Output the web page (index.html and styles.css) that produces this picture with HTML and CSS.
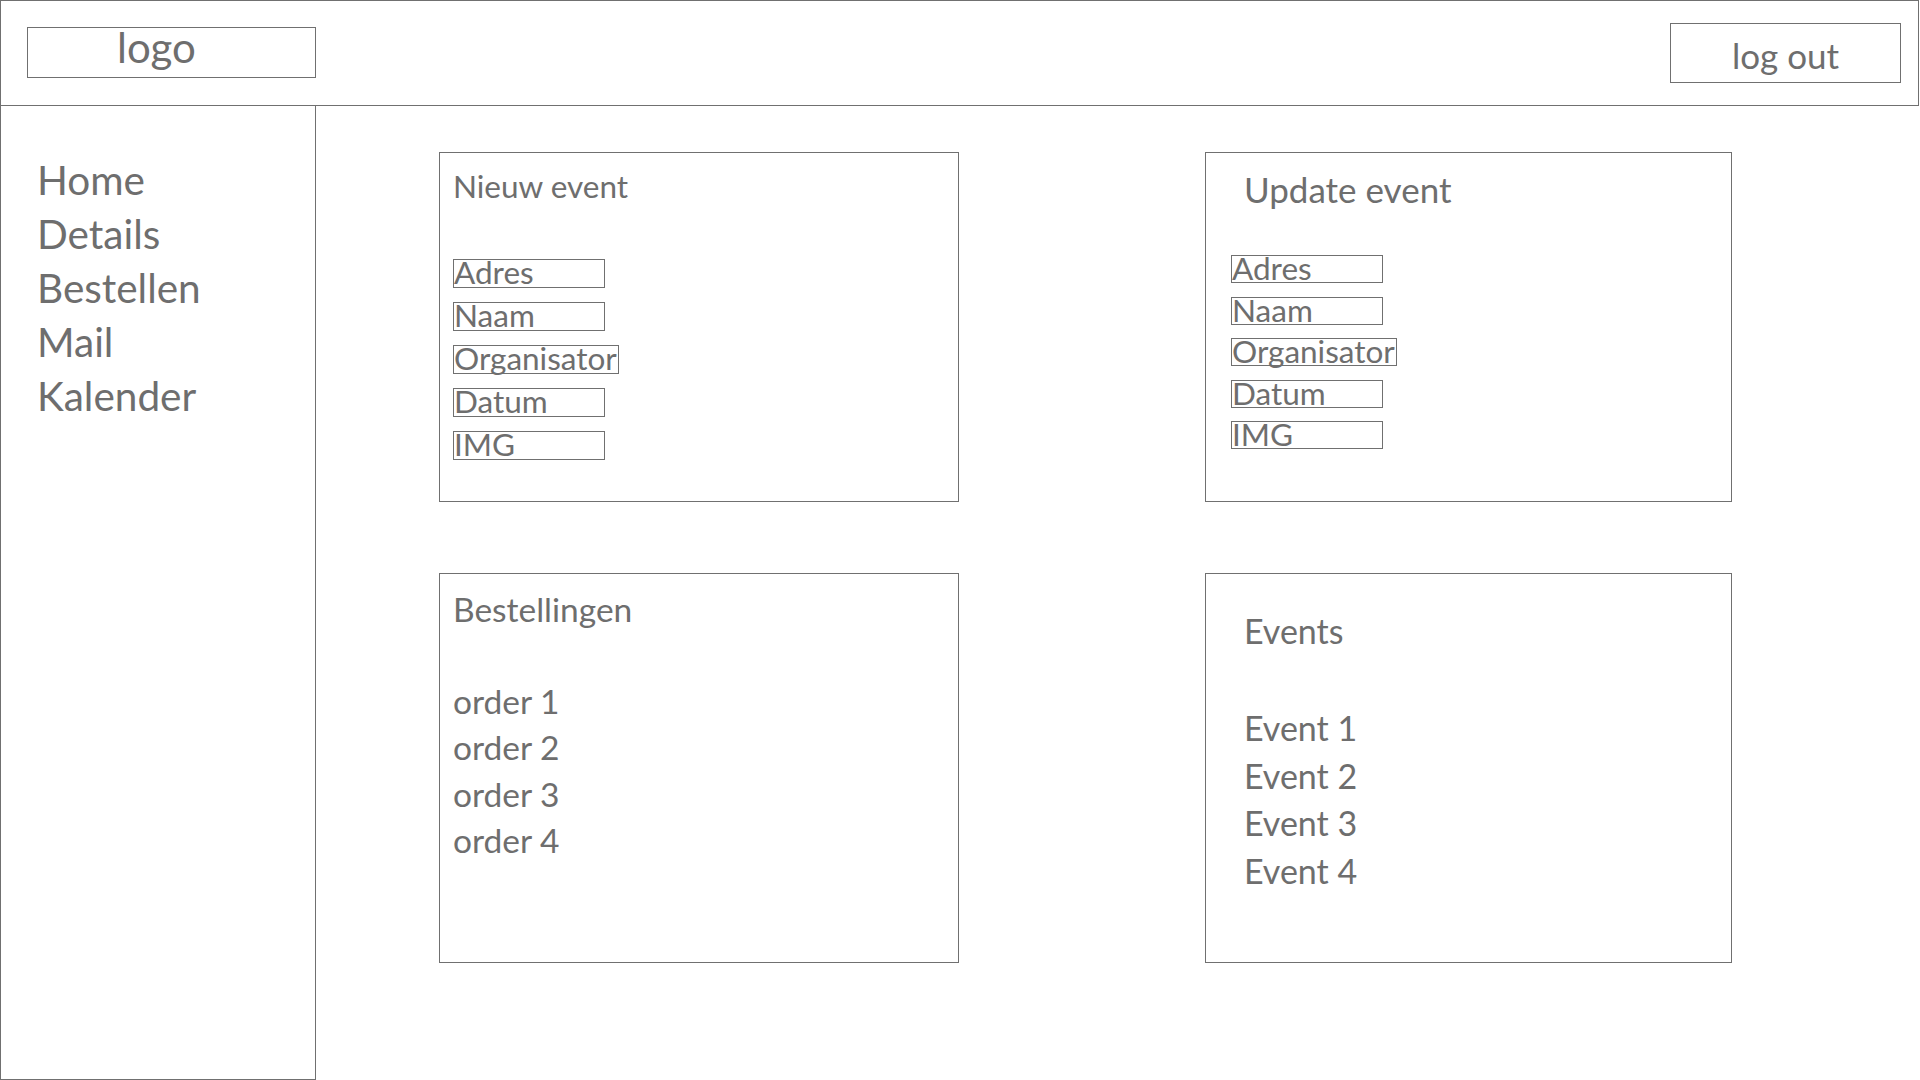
FILE: index.html
```html
<!DOCTYPE html>
<html lang="nl">
<head>
<meta charset="utf-8">
<title>Dashboard wireframe</title>
<link rel="stylesheet" href="styles.css">
</head>
<body>
<div class="app">
  <header class="topbar">
    <div class="logo">logo</div>
    <div class="logout">log out</div>
  </header>
  <div class="body-row">
    <nav class="sidebar">
      <a class="nav-item">Home</a>
      <a class="nav-item">Details</a>
      <a class="nav-item">Bestellen</a>
      <a class="nav-item">Mail</a>
      <a class="nav-item">Kalender</a>
    </nav>
    <main class="dashboard">
      <section class="card card-new">
        <h2 class="card-title title-new">Nieuw event</h2>
        <div class="field-list fields-new">
          <div class="field">Adres</div>
          <div class="field">Naam</div>
          <div class="field">Organisator</div>
          <div class="field">Datum</div>
          <div class="field">IMG</div>
        </div>
      </section>
      <section class="card card-update">
        <h2 class="card-title title-update">Update event</h2>
        <div class="field-list fields-update">
          <div class="field">Adres</div>
          <div class="field">Naam</div>
          <div class="field">Organisator</div>
          <div class="field">Datum</div>
          <div class="field">IMG</div>
        </div>
      </section>
      <section class="card card-orders">
        <h2 class="card-title title-orders">Bestellingen</h2>
        <ul class="item-list orders">
          <li>order 1</li>
          <li>order 2</li>
          <li>order 3</li>
          <li>order 4</li>
        </ul>
      </section>
      <section class="card card-events">
        <h2 class="card-title title-events">Events</h2>
        <ul class="item-list events">
          <li>Event 1</li>
          <li>Event 2</li>
          <li>Event 3</li>
          <li>Event 4</li>
        </ul>
      </section>
    </main>
  </div>
</div>
</body>
</html>
```

FILE: styles.css
```css
html, body {
  margin: 0;
  padding: 0;
  background: #ffffff;
}

body {
  width: 1920px;
  height: 1080px;
  overflow: hidden;
  font-family: Lato, "Noto Sans", sans-serif;
  font-weight: 400;
  color: #6e6e6e;
}

.app {
  width: 1920px;
  height: 1080px;
}

/* ---------- top bar ---------- */
.topbar {
  box-sizing: border-box;
  width: 1919px;
  height: 106px;
  border: 1px solid #707070;
  display: flex;
  justify-content: space-between;
  align-items: flex-start;
  padding: 0 17px 0 26px;
}

.logo {
  box-sizing: border-box;
  width: 289px;
  height: 51px;
  margin-top: 26px;
  border: 1px solid #707070;
  padding-left: 89px;
  font-size: 42px;
  line-height: 38px;
}

.logout {
  box-sizing: border-box;
  width: 231px;
  height: 60px;
  margin-top: 22px;
  border: 1px solid #707070;
  display: flex;
  align-items: center;
  justify-content: center;
  padding-top: 3px;
  font-size: 35px;
  line-height: 36px;
}

/* ---------- body ---------- */
.body-row {
  display: flex;
  height: 974px;
}

.sidebar {
  box-sizing: border-box;
  width: 316px;
  height: 974px;
  border: 1px solid #707070;
  border-top: none;
  padding: 47px 0 0 36px;
  display: flex;
  flex-direction: column;
}

.nav-item {
  font-size: 40.5px;
  line-height: 54px;
  color: #6e6e6e;
}

.dashboard {
  padding: 46px 0 0 123px;
  display: grid;
  grid-template-columns: 520px 527px;
  grid-template-rows: 350px 390px;
  column-gap: 246px;
  row-gap: 71px;
  align-content: start;
}

.card {
  box-sizing: border-box;
  border: 1px solid #707070;
  display: flex;
  flex-direction: column;
  align-items: flex-start;
}

.card-title {
  margin: 0;
  font-weight: 400;
  line-height: 40px;
  white-space: nowrap;
}

/* Nieuw event */
.card-new {
  padding: 13px 13px 0 13px;
}
.title-new {
  font-size: 31.5px;
}
.fields-new {
  margin-top: 53px;
  gap: 14px;
}
.fields-new .field {
  height: 29px;
}

/* Update event */
.card-update {
  padding: 16px 13px 0 25px;
}
.title-update {
  font-size: 35px;
  margin-left: 13px;
}
.fields-update {
  margin-top: 46px;
  gap: 13.5px;
}
.fields-update .field {
  height: 28px;
}

.field-list {
  display: flex;
  flex-direction: column;
  align-items: flex-start;
}

.field {
  box-sizing: border-box;
  min-width: 152px;
  border: 1px solid #707070;
  padding-right: 1px;
  font-size: 31.5px;
  line-height: 24px;
  white-space: nowrap;
}

/* Bestellingen */
.card-orders {
  padding: 15px 13px 0 13px;
}
.title-orders {
  font-size: 33.5px;
}

.item-list {
  list-style: none;
  margin: 0;
  padding: 0;
}

.orders {
  margin-top: 49px;
}
.orders li {
  font-size: 33.5px;
  line-height: 46.3px;
}

/* Events */
.card-events {
  padding: 37px 13px 0 38px;
}
.title-events {
  font-size: 34px;
}
.events {
  margin-top: 53px;
}
.events li {
  font-size: 34px;
  line-height: 47.7px;
}
```
